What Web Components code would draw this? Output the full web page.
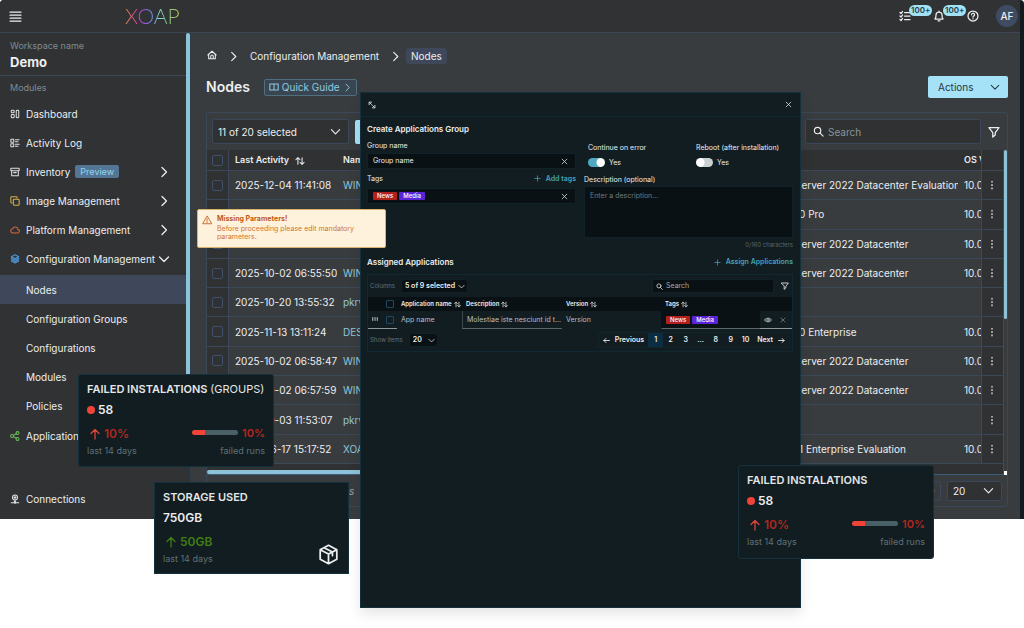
<!DOCTYPE html>
<html lang="en">
<head>
<meta charset="utf-8">
<title>XOAP – Nodes</title>
<style>
  body { margin: 0; background: #fff; font-family: Inter, "Liberation Sans", sans-serif; font-size: 10px; line-height: 12px; color: #eceeef; }
</style>
</head>
<body>
<xoap-stage></xoap-stage>
<script>
const base = `
  *, *::before, *::after { box-sizing: border-box; }
  button, input, select, textarea { font: inherit; color: inherit; margin: 0; }
  button { background: none; border: 0; padding: 0; cursor: pointer; display: flex; align-items: center; }
  a { color: inherit; text-decoration: none; }
  h1, h2, h3, p { margin: 0; }
`;
function define(name, render) {
  customElements.define(name, class extends HTMLElement {
    connectedCallback() {
      if (this.shadowRoot) return;
      const t = document.createElement('template');
      t.innerHTML = render(this);
      this.attachShadow({ mode: 'open' }).append(t.content.cloneNode(true));
    }
  });
}
const a = (el, n, d = '') => el.getAttribute(n) ?? d;

const icons = {
  menu: '<path d="M2 4h20M2 9.500h20M2 15h20M2 20.500h20"/>',
  dash: '<rect x="3" y="3" width="7" height="6" rx="2"/><rect x="3" y="13" width="7" height="8" rx="2"/><rect x="15" y="3" width="6" height="18" rx="2"/>',
  activity: '<rect x="2" y="3" width="7" height="7" rx="1"/><rect x="2" y="14" width="7" height="7" rx="1"/><path d="M13 4h9M13 9h6M13 15h9M13 20h6"/>',
  box: '<rect x="2" y="3" width="20" height="6" rx="1"/><path d="M4 9v12h16V9M9 13.500h6"/>',
  copy: '<rect x="8" y="8" width="14" height="14" rx="2"/><path d="M5 17H4a2 2 0 0 1-2-2V4a2 2 0 0 1 2-2h11a2 2 0 0 1 2 2v1"/>',
  cloud: '<path d="M17.500 19H7a5 5 0 0 1-.5-10A6.500 6.500 0 0 1 19 10.500a4.300 4.300 0 0 1-1.500 8.500Z"/>',
  layers: '<path d="m12 2 9 4.500-9 4.500-9-4.500ZM3 10l9 4.500 9-4.500M3 13.500 12 18l9-4.500M3 17l9 4.500 9-4.500"/>',
  share: '<circle cx="18" cy="5" r="3.500"/><circle cx="5" cy="12" r="3.500"/><circle cx="18" cy="19" r="3.500"/><path d="m8.500 10.500 6.500-4M8.500 13.500l6.500 4"/>',
  conn: '<circle cx="12" cy="8.500" r="6"/><path d="M12 5v7M9.500 8.500h5M12 15v5M3 21h18"/><circle cx="12" cy="20" r="2"/>',
  right: '<path d="m8 3 9 9-9 9"/>',
  down: '<path d="m3 8 9 9 9-9"/>',
  home: '<path d="M4 11v10h16V11M2 12l10-9 10 9M9 21v-6a3 3 0 0 1 6 0v6"/>',
  book: '<path d="M12 5H2v14h10M12 5h10v14H12M12 5v14"/>',
  list: '<path d="m2 5 2 2 3-4M2 12l2 2 3-4M2 19l2 2 3-4M11 5h11M11 12h11M11 19h11"/>',
  bell: '<path d="M4 18c2-2 2-4 2-8a6 6 0 0 1 12 0c0 4 0 6 2 8ZM10 21.500h4M12 2v2"/>',
  help: '<circle cx="12" cy="12" r="10"/><path d="M9 9.500a3 3 0 1 1 4 2.800c-.7.300-1 .8-1 1.700M12 17v.5"/>',
  search: '<circle cx="10" cy="10" r="7"/><path d="m15 15 7 7"/>',
  filter: '<path d="M2 3h20l-7.500 10v5l-5 4v-9Z"/>',
  sort: '<path d="M7 20V4M2 9l5-5 5 5M17 4v16M12 15l5 5 5-5"/>',
  dots: '<path d="M12 3v2M12 11v2M12 19v2"/>',
  x: '<path d="m4 4 16 16M20 4 4 20"/>',
  expand: '<path d="m4 4 16 16M3 10V3h7ZM21 14v7h-7Z"/>',
  plus: '<path d="M12 3v18M3 12h18"/>',
  up: '<path d="M12 22V3M4 11l8-8 8 8"/>',
  left: '<path d="M22 12H3M10 5l-7 7 7 7"/>',
  next: '<path d="M2 12h19M14 5l7 7-7 7"/>',
  warn: '<path d="M12 3 1.500 21h21ZM12 9v6M12 17.500v1"/>',
  eye: '<path d="M1.500 12C6 4.500 18 4.500 22.500 12 18 19.500 6 19.500 1.500 12Z"/><circle cx="12" cy="12" r="3.500"/>',
  grip: '<path d="M3 6v12M12 6v12M21 6v12"/>',
  cube: '<path d="m12 1.500 9.500 5v11l-9.500 5-9.500-5v-11ZM2.500 6.500l9.500 5 9.500-5M12 11.500v11M7 4.200l9.500 5v4"/>'
};
define('x-icon', el => `<style>
  :host { display: inline-flex; flex: none; width: ${a(el,'size','10')}px; height: ${a(el,'size','10')}px; }
  svg { width: 100%; height: 100%; fill: none; stroke: currentColor; stroke-width: ${a(el,'stroke','2.5')}; stroke-linecap: round; stroke-linejoin: round; }
</style><svg viewBox="0 0 24 24" aria-hidden="true">${icons[a(el,'name')]}</svg>`);

define('tag-chip', () => `<style>
  :host { display: inline-flex; align-items: center; height: 8px; padding: 0 4px; border-radius: 1px; background: var(--chip, #b3211c); color: #fff; font-size: 6px; line-height: 8px; font-weight: 500; }
</style><slot></slot>`);

define('pick-list', el => `<style>${base}
  :host { display: block; position: relative; }
  select { appearance: none; width: 100%; height: 100%; display: block; background: var(--field, #2f3133); border: 1px solid var(--line, #3b485b); border-radius: 3px; padding: 0 var(--pad, 5px); outline: 0; }
  x-icon { position: absolute; right: var(--pad, 8px); top: 0; bottom: 0; margin: auto; pointer-events: none; }
</style><select aria-label="${a(el,'label')}"><option>${a(el,'value')}</option></select><x-icon name="down" size="${a(el,'chevron','11')}"></x-icon>`);

define('app-header', () => `<style>${base}
  :host { display: flex; align-items: center; height: 33px; padding: 0 2px 0 9px; background: #303234; border-bottom: 1px solid #3b4553; }
  .logo { margin-left: 103px; font: 300 21px/24px Lato, sans-serif; color: transparent; background: linear-gradient(90deg, #e08a4a 0, #e0459c 20%, #a04be0 32%, #6a8fe8 50%, #86d8cc 62%, #7fbf8a 78%, #c8d84a 100%); background-clip: text; -webkit-background-clip: text; }
  .tools { margin-left: auto; display: flex; align-items: center; gap: 22px; }
  .tool { position: relative; }
  .badge { position: absolute; left: 10px; top: -5px; height: 11px; padding: 0 2px; border-radius: 6px; background: #a3e2f5; color: #27404a; font-size: 8px; line-height: 11px; font-weight: 600; }
  .avatar { width: 22px; height: 22px; border-radius: 50%; justify-content: center; background: #3f4b60; margin-left: -5px; font-weight: 500; }
</style>
<button aria-label="Menu"><x-icon name="menu" size="13"></x-icon></button>
<a class="logo" href="#">XOAP</a>
<div class="tools">
  <button class="tool" aria-label="Tasks"><x-icon name="list" size="12"></x-icon><span class="badge">100+</span></button>
  <button class="tool" aria-label="Notifications"><x-icon name="bell" size="12"></x-icon><span class="badge">100+</span></button>
  <button class="tool" aria-label="Help"><x-icon name="help" size="12"></x-icon></button>
  <button class="avatar">AF</button>
</div>`);

define('nav-item', el => `<style>${base}
  :host { display: block; }
  a { display: flex; align-items: center; height: 29px; padding: 0 16px 0 10px; }
  x-icon.lead { color: ${a(el,'tint','#dfe1e2')}; margin-right: 6px; }
  x-icon.tail { margin-left: auto; }
  :host([sub]) a { padding-left: 26px; }
  :host([current]) a { background: #3e485a; }
</style><a href="#">${el.hasAttribute('icon') ? `<x-icon class="lead" name="${a(el,'icon')}"></x-icon>` : ''}<slot></slot>${el.hasAttribute('arrow') ? `<x-icon class="tail" name="${a(el,'arrow')}" size="12"></x-icon>` : ''}</a>`);

define('side-nav', () => `<style>${base}
  :host { display: flex; flex-direction: column; width: 186px; flex: none; background: #303234; }
  .workspace { padding: 7px 10px; height: 43px; border-bottom: 1px solid #3d4957; display: flex; flex-direction: column; gap: 2px; }
  .hint { font-size: 9px; color: #7f8d91; }
  h2 { font-size: 13px; line-height: 16px; font-weight: 700; }
  .modules { padding: 6px 10px 5px; }
  nav { display: flex; flex-direction: column; flex: 1; padding-bottom: 6px; }
  .group { padding: 2px 0 1px; }
  .last { margin-top: auto; }
  .pill { margin-left: 5px; padding: 0 5px; height: 13px; line-height: 13px; font-size: 9px; border-radius: 2px; background: #547594; color: #8fd5f0; }
</style>
<div class="workspace"><span class="hint">Workspace name</span><h2>Demo</h2></div>
<div class="hint modules">Modules</div>
<nav>
  <nav-item icon="dash">Dashboard</nav-item>
  <nav-item icon="activity">Activity Log</nav-item>
  <nav-item icon="box" arrow="right">Inventory <span class="pill">Preview</span></nav-item>
  <nav-item icon="copy" tint="#d9b04c" arrow="right">Image Management</nav-item>
  <nav-item icon="cloud" tint="#d9663f" arrow="right">Platform Management</nav-item>
  <nav-item icon="layers" tint="#4f94d4" arrow="down">Configuration Management</nav-item>
  <div class="group">
    <nav-item sub current>Nodes</nav-item>
    <nav-item sub>Configuration Groups</nav-item>
    <nav-item sub>Configurations</nav-item>
    <nav-item sub>Modules</nav-item>
    <nav-item sub>Policies</nav-item>
  </div>
  <nav-item icon="share" tint="#6cbf5a">Application</nav-item>
  <nav-item class="last" icon="conn">Connections</nav-item>
</nav>`);

const nodes = [
  ['2025-12-04 11:41:08', 'WIN-', 'Server 2022 Datacenter Evaluation', '10.0'],
  ['', '', '10 Pro', '10.0'],
  ['', '', 'Server 2022 Datacenter', '10.0'],
  ['2025-10-02 06:55:50', 'WIN-', 'Server 2022 Datacenter', '10.0'],
  ['2025-10-20 13:55:32', 'pkrv', '', ''],
  ['2025-11-13 13:11:24', 'DES', '10 Enterprise', '10.0'],
  ['2025-10-02 06:58:47', 'WIN-', 'Server 2022 Datacenter', '10.0'],
  ['2025-10-02 06:57:59', 'WIN-', 'Server 2022 Datacenter', '10.0'],
  ['2025-10-03 11:53:07', 'pkrv', '', ''],
  ['2025-06-17 15:17:52', 'XOA', '11 Enterprise Evaluation', '10.0']
];
define('nodes-table', () => `<style>${base}
  :host { display: grid; grid-template-columns: minmax(0, 1fr) 4px; }
  .view { border-bottom: 1px solid #3f5c7c; background: #2f3133; }
  table { width: 100%; height: 314px; table-layout: fixed; border-collapse: separate; border-spacing: 0; background: #393c3f; }
  th, td { padding: 0 6px; text-align: left; font-weight: 400; white-space: nowrap; overflow: hidden; border-bottom: 1px solid #3b4859; }
  th { height: 21px; background: #2f3133; font-size: 9px; font-weight: 600; }
  .check, .more { background: #2f3133; padding: 0 5px; }
  .check { border-right: 1px solid #3b4859; }
  .more { border-left: 1px solid #3b4859; }
  th + th x-icon { margin-left: 6px; vertical-align: middle; }
  .c-check, .c-more { width: 22px; }
  .c-date { width: 108px; } .c-os { width: 169px; } .c-ver { width: 23px; }
  td a { color: #8cc8dc; }
  td.ver, th.ver { padding-right: 0; }
  input { appearance: none; display: block; width: 11px; height: 11px; border: 1px solid #40506a; border-radius: 2px; }
  .rail { border-left: 1px solid #3b4d66; display: flex; flex-direction: column; }
  .thumb { height: 169px; border-radius: 2px; background: #8dc3d6; }
  .grab { margin-top: auto; height: 4px; background: #fff; }
  .hbar { height: 4px; background: #8dc3d6; border-radius: 2px; width: 50%; margin-top: 6px; }
</style>
<div class="view">
<table>
  <colgroup><col class="c-check"><col class="c-date"><col><col class="c-os"><col class="c-ver"><col class="c-more"></colgroup>
  <thead><tr><th class="check"><input type="checkbox" aria-label="Select all"></th><th>Last Activity<x-icon name="sort" size="10"></x-icon></th><th>Name</th><th></th><th class="ver">OS Version</th><th class="more"></th></tr></thead>
  <tbody>${nodes.map(r => `<tr><td class="check"><input type="checkbox" aria-label="Select node"></td><td>${r[0]}</td><td><a href="#">${r[1]}</a></td><td>${r[2]}</td><td class="ver">${r[3]}</td><td class="more"><button aria-label="Row actions"><x-icon name="dots" stroke="3"></x-icon></button></td></tr>`).join('')}</tbody>
</table>
<div class="hbar"></div>
</div>
<div class="rail"><div class="thumb"></div><div class="grab"></div></div>`);

define('nodes-page', () => `<style>${base}
  :host { display: block; flex: 1; min-width: 0; padding: 15px 12px 12px 15px; background: #393c3f; border-left: 1px solid #2f3d48; }
  .crumbs { display: flex; align-items: center; height: 16px; gap: 11px; padding-left: 1px; }
  .crumbs .here { background: #3e485a; border-radius: 3px; padding: 2px 5px; margin-left: -6px; }
  .head { display: flex; align-items: center; height: 22px; margin-top: 12px; }
  h1 { font-size: 14px; line-height: 18px; font-weight: 600; margin-right: 14px; }
  .guide { height: 17px; padding: 0 4px; gap: 3px; border: 1px solid #4f6f80; border-radius: 2px; background: #3a4552; color: #8fcbe0; }
  .actions { margin-left: auto; height: 22px; width: 80px; padding: 0 8px 0 10px; justify-content: space-between; border-radius: 2px; background: #a5e2f8; color: #27383f; }
  .panel { border: 1px solid #3b4859; border-radius: 3px; margin-top: 14px; }
  .bar { display: flex; align-items: center; height: 37px; padding: 0 4px 0 5px; gap: 6px; }
  .bar pick-list { width: 137px; height: 25px; }
  .apply { width: 60px; height: 24px; border-radius: 2px; background: #a5e2f8; }
  .find { margin-left: auto; display: flex; align-items: center; gap: 4px; width: 176px; height: 25px; padding: 0 7px; border: 1px solid #3b485b; border-radius: 3px; background: #2f3133; }
  .find input { flex: 1; min-width: 0; border: 0; background: none; padding: 0; outline: 0; }
  .find input::placeholder { color: #8b9698; opacity: 1; }
  .funnel { padding: 0 3px; margin-left: -2px; }
  .foot { display: flex; align-items: center; height: 31px; padding: 0 5px; }
  .foot i { margin-left: 110px; color: #9aa3a6; }
  .foot .fwd { margin-left: auto; width: 40px; height: 20px; justify-content: flex-end; padding-right: 5px; border: 1px solid #3b485b; border-radius: 3px; }
  .foot pick-list { width: 55px; height: 20px; margin-left: 6px; }
</style>
<div class="crumbs"><a href="#" aria-label="Home"><x-icon name="home" size="10"></x-icon></a><x-icon name="right" size="11"></x-icon><a href="#">Configuration Management</a><x-icon name="right" size="11"></x-icon><span class="here">Nodes</span></div>
<div class="head"><h1>Nodes</h1><button class="guide"><x-icon name="book"></x-icon>Quick Guide<x-icon name="right" size="9"></x-icon></button><button class="actions">Actions<x-icon name="down" size="10"></x-icon></button></div>
<section class="panel">
  <div class="bar"><pick-list label="Columns" value="11 of 20 selected"></pick-list><button class="apply" aria-label="Apply"></button>
    <div class="find"><x-icon name="search" size="11"></x-icon><input type="search" placeholder="Search" aria-label="Search nodes"></div><button class="funnel" aria-label="Filter"><x-icon name="filter" size="12"></x-icon></button></div>
  <nodes-table></nodes-table>
  <div class="foot"><i>entries</i><button class="fwd" aria-label="Next page"><x-icon name="next" size="8"></x-icon></button><pick-list label="Rows per page" value="20"></pick-list></div>
</section>`);

define('group-dialog', () => `<style>${base}
  :host { display: flex; flex-direction: column; background: #121d21; border: 1px solid #14303d; font-size: 7px; line-height: 8px; box-shadow: 0 6px 12px #0000001a; --field: #0a1114; --line: #10212a; }
  header { display: flex; align-items: center; justify-content: space-between; height: 24px; padding: 0 8px 0 7px; border-bottom: 1px solid #11262f; }
  .body { padding: 7px 7px 0 6px; }
  h2 { font-size: 8px; line-height: 10px; font-weight: 600; }
  .form { display: grid; grid-template-columns: 1fr 1fr; gap: 8px; }
  .form h2 { margin-bottom: 4px; }
  .col { display: flex; flex-direction: column; min-width: 0; }
  .line { display: flex; align-items: center; justify-content: space-between; height: 15px; }
  .line.tall { height: 19px; }
  .link { color: #45a3b8; font-weight: 600; gap: 5px; }
  .field { display: flex; align-items: center; gap: 2px; height: 16px; padding: 0 7px 0 5px; background: #0a1114; border: 1px solid #10212a; }
  .field input { flex: 1; min-width: 0; border: 0; padding: 0; background: none; outline: 0; }
  .field button { margin-left: auto; }
  .switches { display: grid; grid-template-columns: 1fr 93px; margin-top: 20px; padding: 0 4px; gap: 6px; height: 32px; align-content: start; }
  .switch { display: grid; grid-template-columns: auto 1fr; gap: 6px 4px; align-items: center; white-space: nowrap; }
  .switch label { grid-column: 1 / -1; }
  .switch input { appearance: none; width: 17px; height: 9px; border-radius: 5px; background: radial-gradient(circle at 4px 50%, #fff 4px, transparent 5px), #c9d2d2; }
  .switch input:checked { background: radial-gradient(circle at 13px 50%, #fff 4px, transparent 5px), #4fa9c0; }
  textarea { display: block; width: 100%; height: 52px; resize: none; padding: 5px; margin-top: 2px; background: #0a1114; border: 1px solid #10212a; outline: 0; }
  textarea::placeholder { color: #6f7b7d; opacity: 1; }
  .count { text-align: right; color: #59676b; font-size: 6px; margin-top: 3px; }
  .title { display: flex; align-items: center; justify-content: space-between; height: 12px; margin-top: 7px; }
  .list { border: 1px solid #112832; margin-top: 6px; }
  .tools, .pager { display: flex; align-items: center; height: 22px; padding: 0 2px; }
  .dim { color: #627074; font-size: 6px; }
  pick-list { height: 14px; --pad: 3px; font-weight: 600; }
  .cols { width: 67px; margin-left: 6px; } .rows { width: 29px; margin-left: 6px; }
  .find { margin-left: auto; width: 122px; height: 14px; padding: 0 3px; gap: 3px; }
  .find input::placeholder { color: #a0aaac; opacity: 1; }
  .funnel { margin: 0 1px 0 7px; }
  table { width: 100%; table-layout: fixed; border-spacing: 0; }
  th, td { padding: 0 4px; text-align: left; white-space: nowrap; overflow: hidden; text-overflow: ellipsis; }
  th { height: 14px; font-size: 6px; font-weight: 600; background: #0a1114; padding-right: 0; }
  th x-icon { margin-left: 2px; vertical-align: middle; }
  td { height: 18px; color: #b7bfc1; border-bottom: 1px solid transparent; }
  td.u { border-bottom-color: #8f9799; }
  td.edit { border-left: 1px solid #3b474b; border-bottom-color: #5b676b; padding-right: 0; }
  td.dark { background: #0a1114; border-left-color: #0a1114; }
  td .row { display: flex; align-items: center; gap: 2px; }
  td.acts .row { gap: 8px; }
  input[type=checkbox].box { appearance: none; display: block; width: 8px; height: 8px; border: 1px solid #1d4a63; border-radius: 1px; }
  .pager nav { margin-left: auto; display: flex; align-items: center; border: 1px solid #11242c; font-weight: 600; }
  .pager nav a { width: 15px; height: 14px; display: flex; align-items: center; justify-content: center; }
  .pager nav a.wide { width: auto; padding: 0 4px; gap: 5px; }
  .pager nav a.on { background: #0c2c42; }
</style>
<header><button aria-label="Expand"><x-icon name="expand" size="8" stroke="2"></x-icon></button><button aria-label="Close"><x-icon name="x" size="7"></x-icon></button></header>
<div class="body">
  <div class="form">
    <div class="col">
      <h2>Create Applications Group</h2>
      <div class="line"><label for="gname">Group name</label></div>
      <div class="field"><input id="gname" value="Group name"><button aria-label="Clear name"><x-icon name="x" size="7"></x-icon></button></div>
      <div class="line tall"><span>Tags</span><button class="link"><x-icon name="plus" size="7"></x-icon>Add tags</button></div>
      <div class="field"><tag-chip>News</tag-chip><tag-chip style="--chip:#5a25d8">Media</tag-chip><button aria-label="Clear tags"><x-icon name="x" size="7"></x-icon></button></div>
    </div>
    <div class="col">
      <div class="switches">
        <div class="switch"><label for="cont">Continue on error</label><input type="checkbox" role="switch" id="cont" checked><span>Yes</span></div>
        <div class="switch"><label for="boot">Reboot (after installation)</label><input type="checkbox" role="switch" id="boot"><span>Yes</span></div>
      </div>
      <label for="desc">Description (optional)</label>
      <textarea id="desc" placeholder="Enter a description..."></textarea>
      <div class="count">0/160 characters</div>
    </div>
  </div>
  <div class="title"><h2>Assigned Applications</h2><button class="link"><x-icon name="plus" size="7"></x-icon>Assign Applications</button></div>
  <div class="list">
    <div class="tools"><span class="dim">Columns</span><pick-list class="cols" label="Columns" value="5 of 9 selected" chevron="7"></pick-list>
      <div class="field find"><x-icon name="search" size="7"></x-icon><input type="search" placeholder="Search" aria-label="Search applications"></div><button class="funnel" aria-label="Filter"><x-icon name="filter" size="8"></x-icon></button></div>
    <table>
      <colgroup><col style="width:14px"><col style="width:15px"><col style="width:65px"><col style="width:100px"><col style="width:99px"><col><col style="width:32px"></colgroup>
      <tr><th></th><th><input class="box" type="checkbox" aria-label="Select all applications"></th><th>Application name<x-icon name="sort" size="7"></x-icon></th><th>Description<x-icon name="sort" size="7"></x-icon></th><th>Version<x-icon name="sort" size="7"></x-icon></th><th>Tags<x-icon name="sort" size="7"></x-icon></th><th></th></tr>
      <tr><td class="u"><x-icon name="grip" size="6" stroke="4"></x-icon></td><td class="u"><input class="box" type="checkbox" aria-label="Select App name"></td><td>App name</td><td class="edit">Molestiae iste nesciunt id t...</td><td>Version</td><td class="dark edit"><div class="row"><tag-chip>News</tag-chip><tag-chip style="--chip:#5a25d8">Media</tag-chip></div></td><td class="u acts"><div class="row"><button aria-label="View"><x-icon name="eye" size="8"></x-icon></button><button aria-label="Remove"><x-icon name="x" size="6" stroke="2"></x-icon></button></div></td></tr>
    </table>
    <div class="pager"><span class="dim">Show items</span><pick-list class="rows" label="Show items" value="20" chevron="7"></pick-list>
      <nav><a class="wide" href="#"><x-icon name="left" size="7" stroke="3"></x-icon>Previous</a><a class="on" href="#">1</a><a href="#">2</a><a href="#">3</a><a href="#">...</a><a href="#">8</a><a href="#">9</a><a href="#">10</a><a class="wide" href="#">Next<x-icon name="next" size="7" stroke="3"></x-icon></a></nav></div>
  </div>
</div>`);

define('toast-note', () => `<style>${base}
  :host { display: flex; gap: 5px; padding: 5px 4px; background: #fff2dc; border: 1px solid #d9b36c; border-radius: 2px; color: #cf7430; font-size: 7px; line-height: 8px; }
  strong { display: block; font-weight: 700; color: #bf5a14; margin-bottom: 2px; }
  x-icon { color: #bf5a14; }
  p { max-width: 140px; }
</style><x-icon name="warn" size="10" stroke="2"></x-icon><div role="alert"><strong>Missing Parameters!</strong><p><slot></slot></p></div>`);

define('stat-card', el => `<style>${base}
  :host { display: block; padding: 7px 8px; background: #121d21; border: 1px solid #14303d; border-radius: 3px; }
  h3 { font-size: 11px; line-height: 14px; font-weight: 600; color: #e4e6e7; white-space: nowrap; }
  .total { display: flex; align-items: center; gap: 3px; margin-top: 7px; font-size: 12px; line-height: 14px; font-weight: 600; }
  .dot { width: 8px; height: 8px; border-radius: 50%; background: #f04438; }
  .row { display: flex; align-items: center; justify-content: space-between; }
  .trend { display: flex; align-items: center; gap: 3px; margin: 9px 0 3px; padding-left: 2px; font-size: 12px; line-height: 16px; font-weight: 600; color: #b3261e; }
  .trend x-icon { color: #e04438; }
  .trend.good, .trend.good x-icon { color: #3f7f12; }
  .share { display: flex; align-items: center; gap: 4px; font-size: 11px; font-weight: 600; color: #b3261e; margin-top: 3px; }
  .meter { width: 46px; height: 5px; border-radius: 3px; background: linear-gradient(90deg, #f04438 28%, #4a6067 28%); }
  .dim { font-size: 9px; line-height: 12px; color: #5f7175; }
  .end { align-items: flex-end; padding-right: 1px; }
</style>
<h3><slot></slot></h3>
${a(el,'kind') === 'storage' ? `
<div class="total">750GB</div>
<div class="row end"><div><div class="trend good"><x-icon name="up" size="12"></x-icon>50GB</div><div class="dim">last 14 days</div></div><x-icon name="cube" size="21" stroke="2"></x-icon></div>` : `
<div class="total"><span class="dot"></span>58</div>
<div class="row"><div class="trend"><x-icon name="up" size="12"></x-icon>10%</div><div class="share"><span class="meter"></span>10%</div></div>
<div class="row dim"><span>last 14 days</span><span>failed runs</span></div>`}`);

define('xoap-stage', () => `<style>${base}
  :host { display: block; position: relative; min-height: 628px; }
  .app { padding-right: 4px; background: #121b20; border-radius: 4px 4px 0 0; overflow: hidden; }
  .cols { display: flex; }
  .gutter { width: 4px; flex: none; background: #303234; }
  .gutter::before { content: ""; display: block; height: 400px; border-radius: 2px 2px 0 0; background: #8dc3d6; }
  .light { font-weight: 400; }
  group-dialog, toast-note, stat-card { position: absolute; }
  group-dialog { left: 360px; right: 223px; top: 92px; height: 516px; }
  toast-note { left: 197px; top: 209px; width: 189px; height: 39px; }
  .groups { left: 78px; top: 374px; width: 196px; height: 93px; }
  .storage { left: 154px; top: 482px; width: 195px; height: 92px; border-radius: 0; }
  .runs { right: 90px; top: 465px; width: 196px; height: 94px; }
</style>
<div class="app"><app-header></app-header><div class="cols"><side-nav></side-nav><div class="gutter"></div><nodes-page></nodes-page></div></div>
<group-dialog role="dialog"></group-dialog>
<toast-note>Before proceeding please edit mandatory parameters.</toast-note>
<stat-card class="groups">FAILED INSTALATIONS <span class="light">(GROUPS)</span></stat-card>
<stat-card class="storage" kind="storage">STORAGE USED</stat-card>
<stat-card class="runs">FAILED INSTALATIONS</stat-card>`);
</script>
</body>
</html>
